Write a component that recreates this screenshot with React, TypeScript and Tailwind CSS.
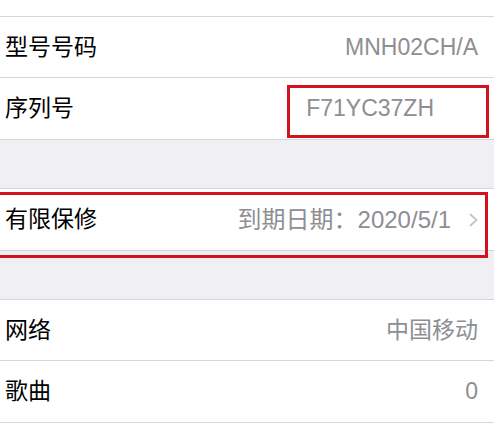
const font = {
  fontFamily: '"Liberation Sans", "Noto Sans CJK SC", sans-serif',
};

type RowProps = {
  label: string;
  value: string;
  chevron?: boolean;
  valueClass?: string;
  children?: React.ReactNode;
};

const Row = ({ label, value, chevron, valueClass = "text-[23px]", children }: RowProps) => (
  <div className="relative flex h-[61px] items-center justify-between pl-[5px] pr-4">
    <span className="text-[23px] text-black">{label}</span>
    <span className={`flex items-center text-[#8e8e93] ${valueClass}`}>
      {value}
      {chevron && (
        <svg
          className="ml-[17px] h-[14px] w-[10px]"
          viewBox="0 0 10 14"
          fill="none"
          stroke="#c4c4c7"
          strokeWidth="1.8"
        >
          <path d="M2 1 L8.5 7 L2 13" />
        </svg>
      )}
    </span>
    {children}
  </div>
);

const App = () => {
  return (
    <div className="h-[433px] w-[494px] overflow-hidden bg-white" style={font}>
      <div className="h-[17px] border-b border-[#d6d6da]" />

      <div className="divide-y divide-[#d6d6da] border-b border-[#d6d6da]">
        <Row label="型号号码" value="MNH02CH/A" />
        <Row label="序列号" value="F71YC37ZH" valueClass="mr-[44px] text-[23px]">
          <div className="absolute bottom-[1px] left-[287px] right-[5px] top-[7px] border-[3px] border-[#d3121c]" />
        </Row>
      </div>

      <div className="h-[48px] bg-[#efeff4]" />

      <div className="relative z-10 border-y border-[#d6d6da]">
        <Row label="有限保修" value="到期日期：2020/5/1" valueClass="text-[24px]" chevron>
          <div className="absolute -bottom-[8px] -left-[3px] right-[6px] top-[3px] border-[3px] border-[#d3121c]" />
        </Row>
      </div>

      <div className="h-[48px] bg-[#efeff4]" />

      <div className="divide-y divide-[#d6d6da] border-y border-[#d6d6da]">
        <Row label="网络" value="中国移动" />
        <Row label="歌曲" value="0" />
      </div>
    </div>
  );
};

export default App;
